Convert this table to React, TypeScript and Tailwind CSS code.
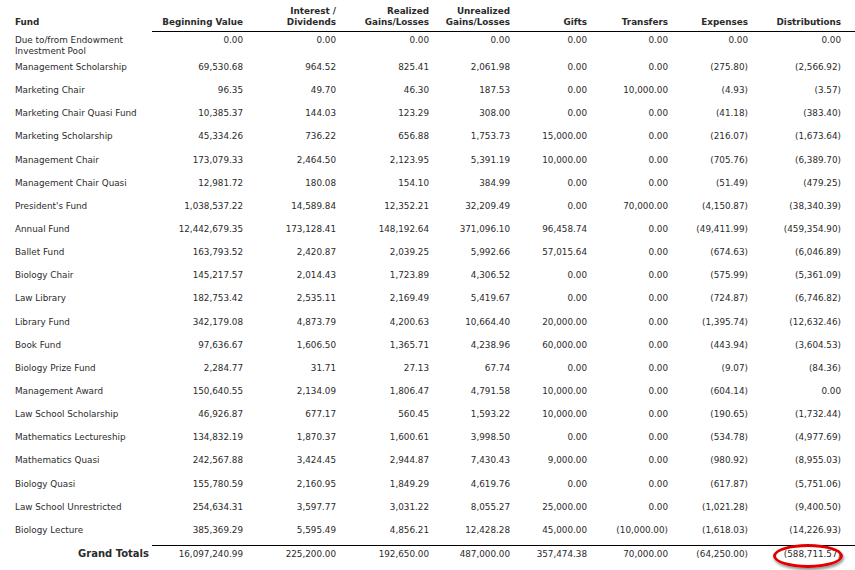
const cols = [
  "w-[91px]",
  "w-[93px]",
  "w-[93px]",
  "w-[81px]",
  "w-[77px]",
  "w-[81px]",
  "w-[80px]",
  "w-[93px]",
];

const headers: string[][] = [
  ["Beginning Value"],
  ["Interest /", "Dividends"],
  ["Realized", "Gains/Losses"],
  ["Unrealized", "Gains/Losses"],
  ["Gifts"],
  ["Transfers"],
  ["Expenses"],
  ["Distributions"],
];

const rows: [string, string[]][] = [
  ["Due to/from Endowment Investment Pool", ["0.00", "0.00", "0.00", "0.00", "0.00", "0.00", "0.00", "0.00"]],
  ["Management Scholarship", ["69,530.68", "964.52", "825.41", "2,061.98", "0.00", "0.00", "(275.80)", "(2,566.92)"]],
  ["Marketing Chair", ["96.35", "49.70", "46.30", "187.53", "0.00", "10,000.00", "(4.93)", "(3.57)"]],
  ["Marketing Chair Quasi Fund", ["10,385.37", "144.03", "123.29", "308.00", "0.00", "0.00", "(41.18)", "(383.40)"]],
  ["Marketing Scholarship", ["45,334.26", "736.22", "656.88", "1,753.73", "15,000.00", "0.00", "(216.07)", "(1,673.64)"]],
  ["Management Chair", ["173,079.33", "2,464.50", "2,123.95", "5,391.19", "10,000.00", "0.00", "(705.76)", "(6,389.70)"]],
  ["Management Chair Quasi", ["12,981.72", "180.08", "154.10", "384.99", "0.00", "0.00", "(51.49)", "(479.25)"]],
  ["President's Fund", ["1,038,537.22", "14,589.84", "12,352.21", "32,209.49", "0.00", "70,000.00", "(4,150.87)", "(38,340.39)"]],
  ["Annual Fund", ["12,442,679.35", "173,128.41", "148,192.64", "371,096.10", "96,458.74", "0.00", "(49,411.99)", "(459,354.90)"]],
  ["Ballet Fund", ["163,793.52", "2,420.87", "2,039.25", "5,992.66", "57,015.64", "0.00", "(674.63)", "(6,046.89)"]],
  ["Biology Chair", ["145,217.57", "2,014.43", "1,723.89", "4,306.52", "0.00", "0.00", "(575.99)", "(5,361.09)"]],
  ["Law Library", ["182,753.42", "2,535.11", "2,169.49", "5,419.67", "0.00", "0.00", "(724.87)", "(6,746.82)"]],
  ["Library Fund", ["342,179.08", "4,873.79", "4,200.63", "10,664.40", "20,000.00", "0.00", "(1,395.74)", "(12,632.46)"]],
  ["Book Fund", ["97,636.67", "1,606.50", "1,365.71", "4,238.96", "60,000.00", "0.00", "(443.94)", "(3,604.53)"]],
  ["Biology Prize Fund", ["2,284.77", "31.71", "27.13", "67.74", "0.00", "0.00", "(9.07)", "(84.36)"]],
  ["Management Award", ["150,640.55", "2,134.09", "1,806.47", "4,791.58", "10,000.00", "0.00", "(604.14)", "0.00"]],
  ["Law School Scholarship", ["46,926.87", "677.17", "560.45", "1,593.22", "10,000.00", "0.00", "(190.65)", "(1,732.44)"]],
  ["Mathematics Lectureship", ["134,832.19", "1,870.37", "1,600.61", "3,998.50", "0.00", "0.00", "(534.78)", "(4,977.69)"]],
  ["Mathematics Quasi", ["242,567.88", "3,424.45", "2,944.87", "7,430.43", "9,000.00", "0.00", "(980.92)", "(8,955.03)"]],
  ["Biology Quasi", ["155,780.59", "2,160.95", "1,849.29", "4,619.76", "0.00", "0.00", "(617.87)", "(5,751.06)"]],
  ["Law School Unrestricted", ["254,634.31", "3,597.77", "3,031.22", "8,055.27", "25,000.00", "0.00", "(1,021.28)", "(9,400.50)"]],
  ["Biology Lecture", ["385,369.29", "5,595.49", "4,856.21", "12,428.28", "45,000.00", "(10,000.00)", "(1,618.03)", "(14,226.93)"]],
];

const totals = ["16,097,240.99", "225,200.00", "192,650.00", "487,000.00", "357,474.38", "70,000.00", "(64,250.00)", "(588,711.57)"];

export default function App() {
  return (
    <div className="w-[855px] h-[570px] overflow-hidden bg-white pl-[15px] text-[8.8px] leading-[11px] text-[#2b2b2b] font-['DejaVu_Sans',Verdana,sans-serif]">
      {/* header */}
      <div className="flex items-end h-[32px]">
        <div className="w-[137px] shrink-0 pb-[3px] font-bold leading-[11.7px]">Fund</div>
        <div className="flex flex-1 items-end border-b border-black pr-[14px]">
          {headers.map((h, i) => (
            <div key={i} className={`${cols[i]} shrink-0 text-right font-bold leading-[11.7px] pb-[2px]`}>
              {h.map((line) => (
                <div key={line}>{line}</div>
              ))}
            </div>
          ))}
        </div>
      </div>

      {/* fund rows */}
      {rows.map(([name, vals]) => (
        <div key={name} className="flex min-h-[23.15px]">
          <div className="w-[137px] shrink-0 pt-[3px] pb-[2px] pr-[8px]">{name}</div>
          {vals.map((v, i) => (
            <div key={i} className={`${cols[i]} shrink-0 text-right pt-[3px]`}>
              {v}
            </div>
          ))}
        </div>
      ))}

      {/* totals */}
      <div className="flex">
        <div className="w-[137px] shrink-0 pt-[3px] pr-[3px] text-right font-bold text-[10px] leading-[11px]">Grand Totals</div>
        <div className="flex flex-1 border-t border-black pr-[14px]">
          {totals.map((v, i) => (
            <div key={i} className={`${cols[i]} shrink-0 text-right pt-[3px] ${i === 7 ? "relative" : ""}`}>
              {v}
              {i === 7 && (
                <div className="absolute right-[-2px] top-[-2px] w-[70px] h-[24px] rounded-[50%] border-[3px] border-[#e00000] shadow-[1px_2px_3px_rgba(0,0,0,0.45)]" />
              )}
            </div>
          ))}
        </div>
      </div>
    </div>
  );
}
